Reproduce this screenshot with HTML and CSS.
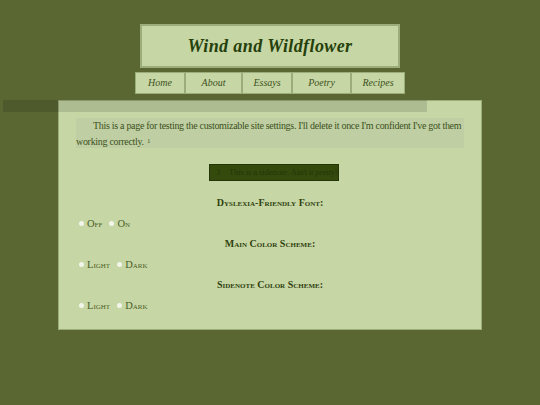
FILE: index.html
```html
<!DOCTYPE html>
<html lang="en">
<head>
    <meta charset="UTF-8">
    <meta name="viewport" content="width=device-width, initial-scale=1.0">
    <title>Wind and Wildflower</title>
    <link rel="stylesheet" href="styles.css">
</head>
<body>
  <header>
    <h1 class="site-title">Wind and Wildflower</h1>
    <nav class="menu">
      <a href="#" class="m1">Home</a>
      <a href="#" class="m2">About</a>
      <a href="#" class="m3">Essays</a>
      <a href="#" class="m4">Poetry</a>
      <a href="#" class="m5">Recipes</a>
    </nav>
  </header>
  <div class="topbar"></div>
  <main class="content">
    <p class="intro">This is a page for testing the customizable site settings. I'll delete it once I'm confident I've got them working correctly. <sup>1</sup></p>
    <div class="note-wrap">
      <div class="sidenote"><span class="note-num">1</span>This is a sidenote. Ain't it pretty?</div>
    </div>
    <h3>Dyslexia-Friendly Font:</h3>
    <div class="options">
      <input type="radio" name="font"><label>Off</label>
      <input type="radio" name="font"><label>On</label>
    </div>
    <h3>Main Color Scheme:</h3>
    <div class="options">
      <input type="radio" name="main"><label>Light</label>
      <input type="radio" name="main"><label>Dark</label>
    </div>
    <h3>Sidenote Color Scheme:</h3>
    <div class="options">
      <input type="radio" name="side"><label>Light</label>
      <input type="radio" name="side"><label>Dark</label>
    </div>
  </main>
</body>
</html>
```

FILE: styles.css
```css
* {margin: 0; box-sizing: border-box;}
body {background-color: #5a6733; color: #2f4210; font-family: "Liberation Serif", serif; height: 405px; overflow: hidden; padding-top: 24px; position: relative;}
header {display: flex; flex-direction: column; align-items: center;}

.site-title {width: 260px; height: 44px; background-color: #c7d6a5; border: 2px solid #9cad7c; color: #25400a; font-size: 18px; font-style: italic; font-weight: bold; letter-spacing: 0.4px; text-align: center; line-height: 40px;}

.menu {display: flex; width: 270px; height: 22px; margin-top: 4px; background-color: #c7d6a5; border: 1px solid #9cad7c;}
.menu a {color: #3d5120; font-size: 10px; font-style: italic; text-decoration: none; text-align: center; line-height: 20px; border-right: 2px solid #9cad7c;}
.menu .m1 {width: 50px;}
.menu .m2 {width: 57px;}
.menu .m3 {width: 50px;}
.menu .m4 {width: 59px;}
.menu .m5 {flex: 1; border-right: none;}

.topbar {position: absolute; left: 3px; top: 100px; width: 424px; height: 12px; background-color: rgba(0, 0, 0, 0.12); z-index: 2;}

.content {width: 424px; height: 230px; margin: 6px 0 0 58px; background-color: #c7d6a5; border: 1px solid #9cad7c; padding: 17px 17px 0 17px;}

.intro {background-color: #bfcfa3; font-size: 10px; letter-spacing: -0.3px; line-height: 16px; text-indent: 17px; color: #3d5120; height: 30px;}
.intro sup {font-size: 7px; line-height: 0; letter-spacing: 0; margin-left: 1px; vertical-align: 2px;}

.note-wrap {display: flex; justify-content: center; margin: 16px 0 0 7px;}
.sidenote {width: 130px; height: 17px; background-color: #334a0c; border: 1px solid #24350a; color: #24350a; font-size: 9px; letter-spacing: -0.25px; line-height: 15px; padding-left: 7px; white-space: nowrap;}
.note-num {margin-right: 8px;}

h3 {font-size: 10px; font-variant: small-caps; font-weight: bold; text-align: center; line-height: 14px; height: 14px; margin-top: 7px; color: #2f4210;}
.note-wrap + h3 {margin-top: 15px;}

.options {display: flex; align-items: center; height: 14px; margin-top: 6px; font-size: 10.5px; font-variant: small-caps; color: #4a5f28;}
.options input {appearance: none; width: 5px; height: 5px; border-radius: 50%; background-color: #f2f5ea; margin: 0 3px;}
.options label {margin-right: 4px;}
```
